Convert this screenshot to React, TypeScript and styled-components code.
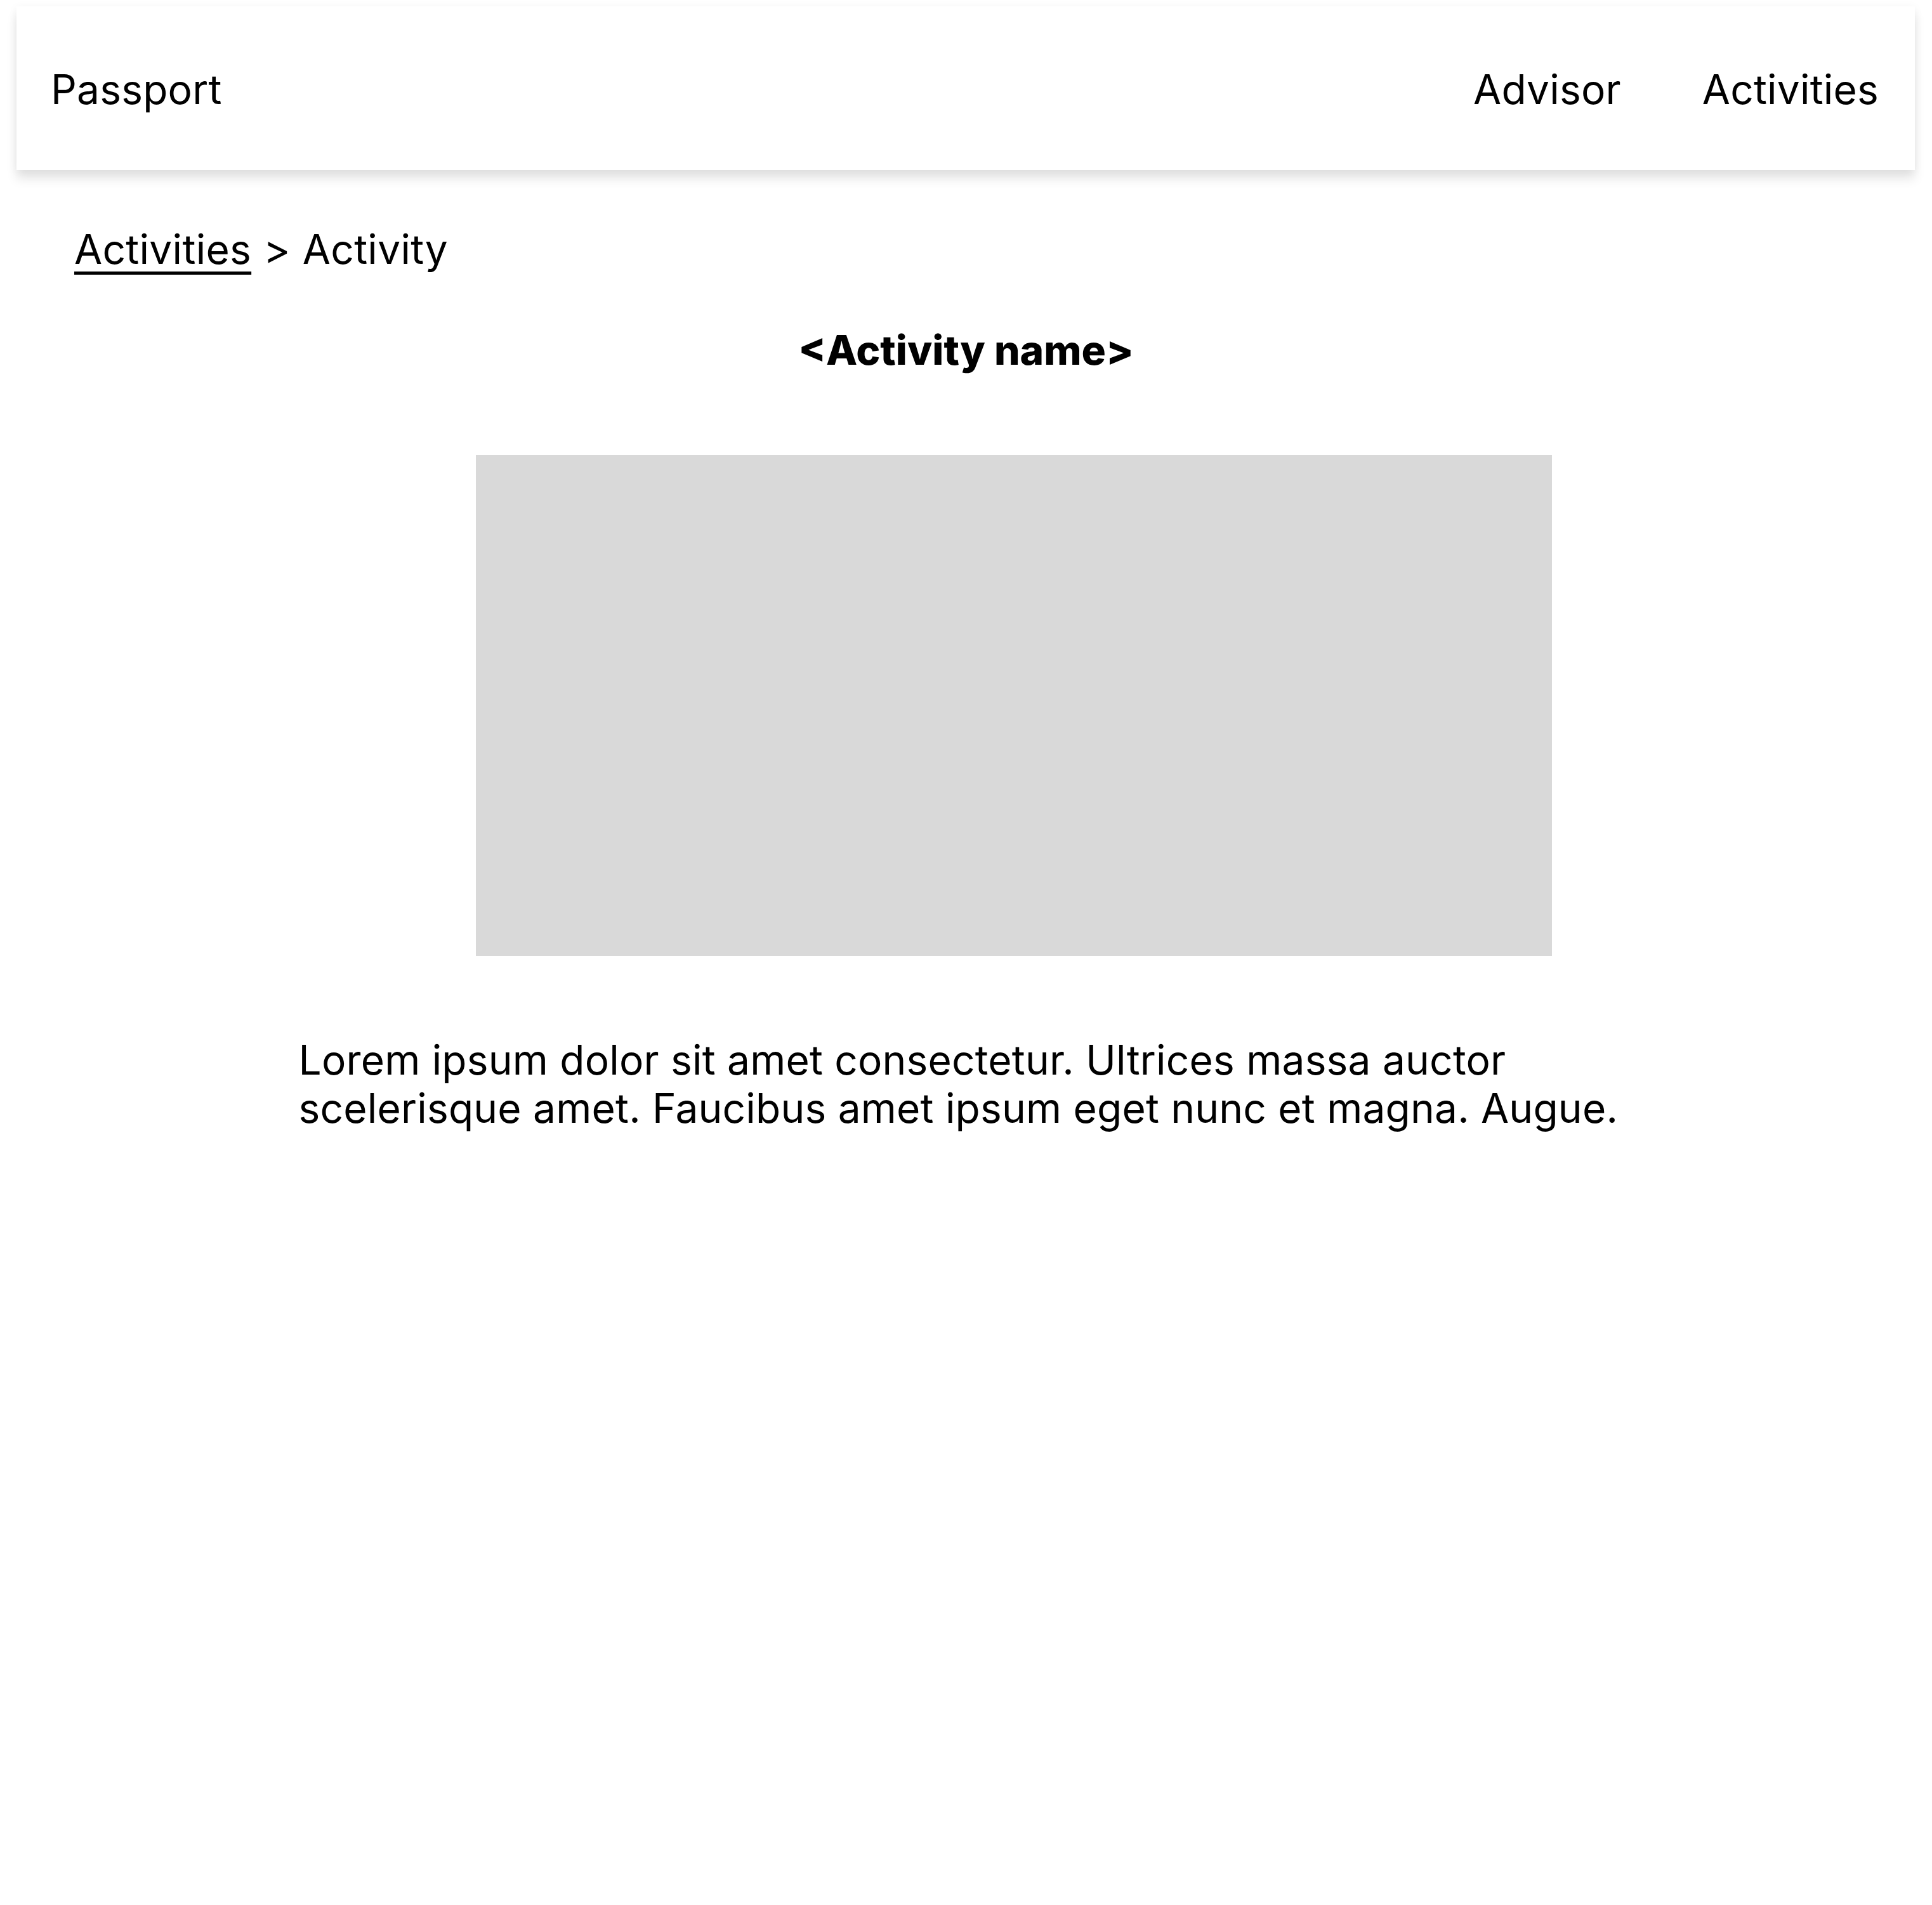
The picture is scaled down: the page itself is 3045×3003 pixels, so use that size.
import React from "react";
import styled, { createGlobalStyle } from "styled-components";

const GlobalStyle = createGlobalStyle`
  html, body {
    margin: 0;
    padding: 0;
    background: #ffffff;
  }
  body {
    font-family: Inter, "Noto Sans", "Liberation Sans", sans-serif;
    color: #000000;
  }
`;

const Page = styled.div`
  width: 3045px;
  min-height: 3003px;
  background: #ffffff;
  display: flex;
  flex-direction: column;
`;

const Header = styled.header`
  margin: 10px 27px 0 26px;
  height: 258px;
  padding: 0 57px 0 54px;
  background: #ffffff;
  box-shadow: 0 14px 16px rgba(0, 0, 0, 0.1), 0 2px 14px rgba(0, 0, 0, 0.05);
  display: flex;
  align-items: center;
  justify-content: space-between;
`;

const Brand = styled.div`
  font-size: 64px;
  line-height: 1.2;
  font-weight: 400;
  letter-spacing: 0.2px;
  padding-top: 4px;
`;

const Nav = styled.nav`
  display: flex;
  gap: 128px;
  padding-top: 4px;
`;

const NavLink = styled.a`
  font-size: 64px;
  line-height: 1.2;
  letter-spacing: 0.2px;
  color: #000;
  text-decoration: none;
`;

const Breadcrumb = styled.div`
  margin-top: 87px;
  padding-left: 117px;
  font-size: 64px;
  line-height: 1.2;
  letter-spacing: 0.3px;
  display: flex;
  gap: 19px;
`;

const CrumbLink = styled.a`
  color: #000;
  text-decoration: underline;
  text-decoration-thickness: 5px;
  text-underline-offset: 12px;
`;

const Title = styled.h1`
  margin: 82px 0 0;
  font-size: 64px;
  line-height: 1.2;
  font-weight: 800;
  text-align: center;
`;

const Content = styled.main`
  width: 2100px;
  margin: 126px auto 0;
  display: flex;
  flex-direction: column;
  align-items: flex-start;
`;

const ImagePlaceholder = styled.div`
  width: 1696px;
  height: 790px;
  margin-left: 277px;
  background: #d9d9d9;
`;

const Description = styled.p`
  margin: 126px 0 0 -2px;
  font-size: 64px;
  line-height: 1.2;
  font-weight: 400;
  letter-spacing: 0.2px;
`;

export default function App() {
  return (
    <>
      <GlobalStyle />
      <Page>
        <Header>
          <Brand>Passport</Brand>
          <Nav>
            <NavLink>Advisor</NavLink>
            <NavLink>Activities</NavLink>
          </Nav>
        </Header>
        <Breadcrumb>
          <CrumbLink>Activities</CrumbLink>
          <span>&gt;</span>
          <span>Activity</span>
        </Breadcrumb>
        <Title>&lt;Activity name&gt;</Title>
        <Content>
          <ImagePlaceholder />
          <Description>
            Lorem ipsum dolor sit amet consectetur. Ultrices massa auctor
            scelerisque amet. Faucibus amet ipsum eget nunc et magna. Augue.
          </Description>
        </Content>
      </Page>
    </>
  );
}
